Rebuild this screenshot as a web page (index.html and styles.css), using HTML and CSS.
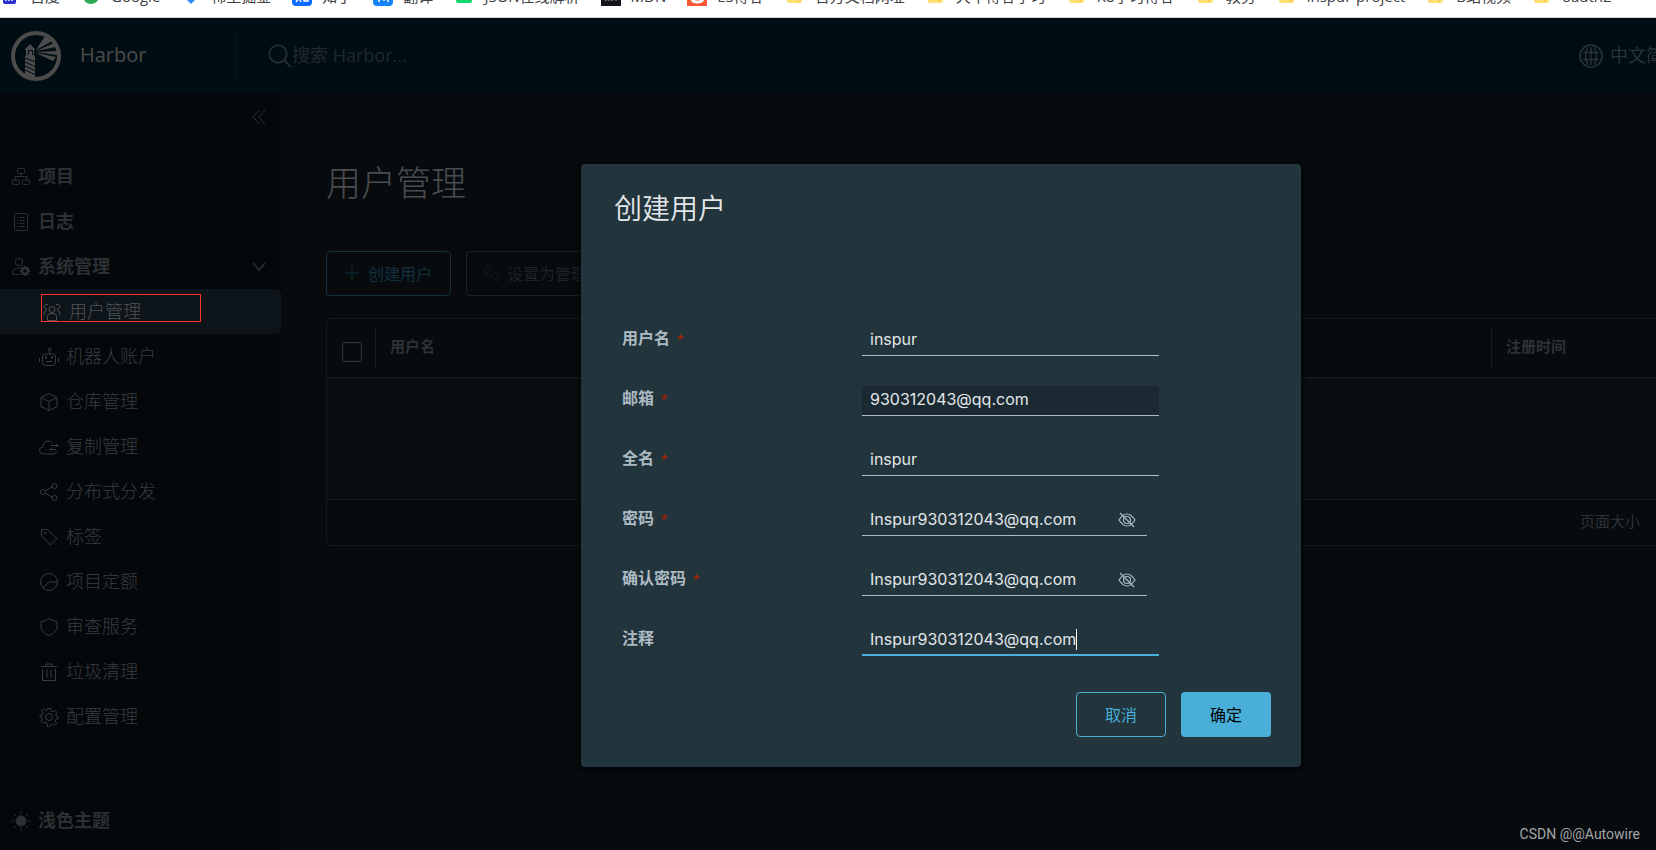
FILE: index.html
```html
<!DOCTYPE html>
<html lang="zh-CN">
<head>
<meta charset="utf-8">
<title>Harbor</title>
<link rel="stylesheet" href="styles.css">
</head>
<body>
<nav class="bookmarks" aria-label="书签">
  <div class="bookmark-row">
    <a class="bookmark" href="#"><svg class="fav" viewBox="0 0 20 20"><path d="M3 10h13v6q0 2-3 2H6q-3 0-3-2z" fill="#2b2fd6"/><path d="M6 13v2M9 13v2M12 13v2" stroke="#fff" stroke-width="1.4"/></svg>百度</a>
    <a class="bookmark" href="#"><svg class="fav" viewBox="0 0 20 20"><circle cx="10" cy="10" r="8" fill="#2fa94f"/></svg>Google</a>
    <a class="bookmark" href="#"><svg class="fav" viewBox="0 0 20 20"><path d="M10 4l7 7-7 7-7-7z" fill="#2d8cff"/></svg>稀土掘金</a>
    <a class="bookmark" href="#"><svg class="fav" viewBox="0 0 20 20"><rect width="20" height="20" rx="4" fill="#0b6cff"/><path d="M4 16l3-4 2 4M12 12v3h4v-3" stroke="#fff" stroke-width="1.5" fill="none"/></svg>知乎</a>
    <a class="bookmark" href="#"><svg class="fav" viewBox="0 0 20 20"><rect width="20" height="20" rx="4" fill="#1684fc"/><path d="M6 16v-4M11 12v3M15 16v-4" stroke="#fff" stroke-width="1.5" fill="none"/></svg>翻译</a>
    <a class="bookmark" href="#"><svg class="fav" viewBox="0 0 20 20"><rect x="2" width="16" height="17" rx="2" fill="#12d66b"/></svg>JSON在线解析</a>
    <a class="bookmark" href="#"><svg class="fav" viewBox="0 0 20 20"><rect width="20" height="20" fill="#15141a"/><path d="M5 15v-3M8 15v-3M11 15v-3M15 15v-3" stroke="#bbb"/></svg>MDN</a>
    <a class="bookmark" href="#"><svg class="fav" viewBox="0 0 20 20"><rect width="20" height="20" fill="#fc5531"/><path d="M5 12q0 4 5 4t6-3" stroke="#fff" stroke-width="3" fill="none"/></svg>ES博客</a>
    <a class="bookmark" href="#"><svg class="fav" viewBox="0 0 20 20"><use href="#folder"/></svg>官方文档网址</a>
    <a class="bookmark" href="#"><svg class="fav" viewBox="0 0 20 20"><use href="#folder"/></svg>大牛博客学习</a>
    <a class="bookmark" href="#"><svg class="fav" viewBox="0 0 20 20"><use href="#folder"/></svg>K8学习博客</a>
    <a class="bookmark" href="#"><svg class="fav" viewBox="0 0 20 20"><use href="#folder"/></svg>教务</a>
    <a class="bookmark" href="#"><svg class="fav" viewBox="0 0 20 20"><use href="#folder"/></svg>inspur-project</a>
    <a class="bookmark" href="#"><svg class="fav" viewBox="0 0 20 20"><use href="#folder"/></svg>B站视频</a>
    <a class="bookmark" href="#"><svg class="fav" viewBox="0 0 20 20"><use href="#folder"/></svg>oauth2</a>
  </div>
  <svg class="defs" aria-hidden="true"><defs><g id="folder"><rect x="2" y="3" width="15" height="14" rx="2" fill="#ffdf72"/><path d="M4 13h9M13 4v12" stroke="#e9be3a" fill="none"/></g></defs></svg>
</nav>

<div class="app">
  <header class="topbar">
    <a class="brand" href="#">
      <svg class="logo" viewBox="0 0 50 50">
        <circle cx="25" cy="25" r="23" fill="none" stroke="currentColor" stroke-width="4"/>
        <path fill="currentColor" fill-rule="evenodd" d="M14 18l5-5 5 5v1h-1v6h1v23q-5 1-10-2V25h1v-6h-1zM17 19v5h1v-4h3v4h1v-5z"/>
        <path fill="currentColor" d="M25 19L34 5l7 5zM25 20l18-8 2 4zM25 21l21-1v4zM25 22l20 4-3 4z"/>
        <path class="cut" d="M14 27l11 4M14 31l11 5M14 35l11 5M14 39l11 5"/>
      </svg>
      <span class="brand-name">Harbor</span>
    </a>
    <label class="search">
      <svg class="search-icon" viewBox="0 0 24 24"><circle cx="10" cy="10" r="8.700"/><path d="M16.500 16.500l6 6.500"/></svg>
      <input class="search-input" type="text" placeholder="搜索 Harbor..." aria-label="搜索 Harbor">
    </label>
    <button class="lang" type="button">
      <svg class="globe" viewBox="0 0 24 24"><circle cx="12" cy="12" r="11"/><path d="M12 3v18M4 8.500h16M4 15.500h16M9 3q-5 9 0 18M15 3q5 9 0 18"/></svg>
      <span>中文简体</span>
    </button>
  </header>

  <div class="content">
    <aside class="sidebar">
      <button class="collapse" type="button" aria-label="收起"><svg viewBox="0 0 14 14"><path d="M7 0L1 7l6 7M13 0L7 7l6 7"/></svg></button>
      <nav class="nav">
        <a class="item group" href="#"><svg class="ico" viewBox="0 0 20 20"><rect x="6.500" y="1.500" width="7" height="5" rx="1"/><rect x="1.500" y="13" width="7" height="4.500" rx="1"/><rect x="11.500" y="13" width="7" height="4.500" rx="1"/><path d="M10 6.500v3M4 13V9.500h12V13"/></svg>项目</a>
        <a class="item group" href="#"><svg class="ico" viewBox="0 0 20 20"><rect x="3.500" y="1.500" width="13" height="17" rx="1"/><path d="M6 5.500h1M8.500 5.500h5M6 8.500h1M8.500 8.500h5M6 11.500h1M8.500 11.500h5M6 14.500h1M8.500 14.500h5"/></svg>日志</a>
        <a class="item group" href="#"><svg class="ico" viewBox="0 0 20 20"><circle cx="8" cy="5" r="3.700"/><path d="M9 17.500H1.500V15q1-4 6.500-4h2"/><circle cx="14" cy="14" r="3" stroke-width="2.400"/><path stroke-width="2" d="M14 9v2M14 17v2M9 14h2M17 14h2M10.500 10.500l1.400 1.400M16 16l1.500 1.500M17.500 10.500L16 12M12 16l-1.500 1.500"/></svg>系统管理<svg class="chevron" viewBox="0 0 14 10"><path d="M1 1l6 7 6-7"/></svg></a>
        <a class="item child active" href="#"><svg class="ico" viewBox="0 0 20 20"><circle cx="10" cy="7.500" r="3"/><path d="M5.500 18.500v-4q0-3 4.500-3t4.500 3v4zM2 13v-2q0-2 3-2.500M18 13v-2q0-2-3-2.500"/><path d="M6 3a2.300 2.300 0 1 0-1 4M14 3a2.300 2.300 0 1 1 1 4"/></svg>用户管理<span class="marker"></span></a>
        <a class="item child" href="#"><svg class="ico" viewBox="0 0 20 20"><rect x="3.500" y="7" width="13" height="11.500" rx="3"/><circle cx="10.500" cy="2.500" r="1.500"/><path d="M10.500 4v3M.5 11v4M19.500 11v4M7 14.500h6"/><path stroke-width="2" d="M6 10.500h2M12 10.500h2"/></svg>机器人账户</a>
        <a class="item child" href="#"><svg class="ico" viewBox="0 0 20 20"><path d="M10 1.500l8 4v9l-8 4-8-4v-9zM2 5.500l8 4 8-4M10 9.500v9"/></svg>仓库管理</a>
        <a class="item child" href="#"><svg class="ico" viewBox="0 0 20 20"><path d="M17.500 14q0 3-4 3H4.500Q.5 17 .5 13.500T4 10q0-6 5.500-6 3 0 4 2.500M12 8.500h7M17 6.500l2 2-2 2M17 12.500h-6M13 10.500l-2 2 2 2"/></svg>复制管理</a>
        <a class="item child" href="#"><svg class="ico" viewBox="0 0 20 20"><circle cx="4" cy="10" r="2.500"/><circle cx="15.500" cy="4" r="2.500"/><circle cx="15.500" cy="16" r="2.500"/><path d="M6 9l7-4M6 11l7 4"/></svg>分布式分发</a>
        <a class="item child" href="#"><svg class="ico" viewBox="0 0 20 20"><path d="M2.500 2.500h6l9.500 9-6.500 6.500-9-9z"/><circle cx="6" cy="6" r=".8"/></svg>标签</a>
        <a class="item child" href="#"><svg class="ico" viewBox="0 0 20 20"><circle cx="10" cy="10" r="8.500"/><path d="M18 10h-8l-6 6"/></svg>项目定额</a>
        <a class="item child" href="#"><svg class="ico" viewBox="0 0 20 20"><path d="M10 1.500q4 3 8 3v5q0 6-8 9-8-3-8-9v-5q4 0 8-3z"/></svg>审查服务</a>
        <a class="item child" href="#"><svg class="ico" viewBox="0 0 20 20"><path d="M2 4.500h16M7 4V2h6v2M3.500 7v11.500h13V7M8 7.500v8M12 7.500v8"/></svg>垃圾清理</a>
        <a class="item child" href="#"><svg class="ico" viewBox="0 0 20 20"><circle cx="10" cy="10" r="3.500"/><path d="M8.500 1.500h3l.5 2.500 2 .8 2-1.500 2 2-1.300 2.200.8 1.500 1.500.5v2l-2 .8-.8 2 1.500 2-2 2-2-1.300-2 .8-.7 2H8.500L8 16l-2-.8-2 1.300-2-2L3.500 12.300 3 10.800 1 10V8.500L3.300 8 4 6 2.500 4l2-2L6.500 3.700 8 3z"/></svg>配置管理</a>
      </nav>
      <button class="item group theme" type="button"><svg class="ico" viewBox="0 0 20 20"><circle cx="10" cy="10" r="5" fill="currentColor"/><path d="M10 0v3M10 17v3M0 10h3M17 10h3M3 3l2 2M15 15l2 2M17 3l-2 2M3 17l2-2"/></svg>浅色主题</button>
    </aside>

    <main class="main">
      <h1 class="page-title">用户管理</h1>
      <div class="actions">
        <button class="btn ghost" type="button"><svg class="act-ico" viewBox="0 0 16 16"><path d="M8 1v14M1 8h14"/></svg>创建用户</button>
        <button class="btn ghost off" type="button"><svg class="act-ico wrench" viewBox="0 0 20 20"><path d="M3 2l4 4-3 2-3-3q-1 5 3 6 2 .5 3 0l7 7q2 2 3.500 0t0-3.500l-7-7Q11 3 7 1.500 5 1 3 2zM16 16h.5"/></svg>设置为管理员</button>
      </div>
      <div class="grid">
        <table class="users">
          <thead>
            <tr>
              <th class="pick"><input class="tick" type="checkbox" aria-label="全选"></th>
              <th class="name"><span class="col">用户名</span></th>
              <th class="time"><span class="col">注册时间</span></th>
            </tr>
          </thead>
          <tbody><tr><td class="empty" colspan="3"></td></tr></tbody>
        </table>
        <div class="grid-foot">页面大小</div>
      </div>
    </main>
  </div>
</div>

<div class="modal" role="dialog" aria-labelledby="dlg-title">
  <h2 class="modal-title" id="dlg-title">创建用户</h2>
  <form class="form">
    <div class="row"><label class="label" for="user">用户名<span class="req">*</span></label><div class="field"><input class="input" id="user" type="text" value="inspur"></div></div>
    <div class="row"><label class="label" for="mail">邮箱<span class="req">*</span></label><div class="field"><input class="input filled" id="mail" type="text" value="930312043@qq.com"></div></div>
    <div class="row"><label class="label" for="full">全名<span class="req">*</span></label><div class="field"><input class="input" id="full" type="text" value="inspur"></div></div>
    <div class="row"><label class="label" for="pass">密码<span class="req">*</span></label><div class="field secret"><input class="input" id="pass" type="text" value="Inspur930312043@qq.com"><button class="eye" type="button" aria-label="隐藏密码"><svg viewBox="0 0 18 16"><path d="M1 8q8-12 16 0-8 12-16 0zM2 1l14 14"/><circle cx="9" cy="8" r="3.500"/></svg></button></div></div>
    <div class="row"><label class="label" for="again">确认密码<span class="req">*</span></label><div class="field secret"><input class="input" id="again" type="text" value="Inspur930312043@qq.com"><button class="eye" type="button" aria-label="隐藏确认密码"><svg viewBox="0 0 18 16"><path d="M1 8q8-12 16 0-8 12-16 0zM2 1l14 14"/><circle cx="9" cy="8" r="3.500"/></svg></button></div></div>
    <div class="row"><label class="label" for="note">注释</label><div class="field"><input class="input focused" id="note" type="text" value="Inspur930312043@qq.com"><span class="caret"></span></div></div>
  </form>
  <div class="modal-foot">
    <button class="btn outline" type="button">取消</button>
    <button class="btn solid" type="button">确定</button>
  </div>
</div>
<div class="watermark">CSDN @@Autowire</div>
</body>
</html>
```
FILE: styles.css
```css
* { box-sizing: border-box; }
html, body { height: 100%; }
body {
  margin: 0;
  display: flex;
  flex-direction: column;
  position: relative;
  overflow: hidden;
  background: #070b0e;
  font-family: "Open Sans", "Noto Sans CJK SC", sans-serif;
}
button, input { font: inherit; color: inherit; }
button { background: none; border: 0; padding: 0; }
a { color: inherit; text-decoration: none; }
svg { display: block; flex: none; fill: none; stroke: currentColor; }

.bookmarks {
  flex: none;
  height: 18px;
  background: #fff;
  border-bottom: 1px solid #cfd5d5;
  overflow: hidden;
}
.bookmark-row { display: flex; gap: 21px; margin-top: -14px; }
.bookmark {
  display: flex;
  flex: none;
  align-items: center;
  gap: 10px;
  font-size: 15px;
  line-height: 20px;
  color: #3c4043;
  white-space: nowrap;
}
.fav { width: 20px; height: 20px; stroke: none; }
.defs { width: 0; height: 0; }

.app { flex: 1; display: flex; flex-direction: column; min-height: 0; }
.topbar {
  flex: none;
  height: 75px;
  display: flex;
  align-items: center;
  background: #000e14;
  color: #2a3338;
  overflow: hidden;
}
.brand {
  width: 237px;
  height: 50px;
  flex: none;
  display: flex;
  align-items: center;
  gap: 19px;
  padding-left: 11px;
  border-right: 1px solid #0c181e;
  color: #4b4b4b;
}
.logo { width: 50px; height: 50px; stroke: none; }
.logo .cut { stroke: #000e14; stroke-width: 1; }
.brand-name { padding-bottom: 2px; font-size: 20px; }
.search { flex: 1; display: flex; align-items: center; padding-left: 31px; }
.search-icon { width: 24px; height: 24px; stroke-width: 1.500; }
.search-input {
  flex: 1;
  min-width: 0;
  border: 0;
  padding: 0 0 2px;
  background: none;
  font-size: 18px;
}
.search-input::placeholder { color: #20282d; opacity: 1; }
.lang {
  display: flex;
  align-items: center;
  gap: 7px;
  width: 77px;
  flex: none;
  font-size: 18px;
  white-space: nowrap;
}
.lang span { padding-bottom: 4px; }
.globe { width: 24px; height: 24px; stroke-width: 1.500; }

.content { flex: 1; display: flex; min-height: 0; }
.sidebar {
  width: 281px;
  flex: none;
  display: flex;
  flex-direction: column;
  background: #04080b;
  color: #2c3033;
  padding-bottom: 8px;
}
.collapse { align-self: flex-end; height: 61px; padding: 0 15px 14px 0; }
.collapse svg { width: 14px; height: 14px; }
.nav { flex: 1; }
.item {
  position: relative;
  display: flex;
  align-items: center;
  gap: 7px;
  height: 45px;
  font-size: 18px;
  line-height: 24px;
}
.nav .item, .theme { padding-bottom: 2px; }
.ico { width: 20px; height: 20px; margin-top: 3px; }
.group { padding: 0 15px 0 11px; font-weight: 700; }
.child { padding-left: 39px; font-weight: 300; color: #383c3f; }
.child.active {
  padding-left: 42px;
  background: #0d141a;
  border-radius: 0 5px 5px 0;
  color: #4f5355;
}
.marker {
  position: absolute;
  left: 41px;
  top: 5px;
  width: 160px;
  height: 28px;
  border: 1px solid #ff332c;
}
.chevron { width: 14px; height: 10px; margin-left: auto; margin-top: 2px; stroke-width: 1.500; }

.main { flex: 1; min-width: 0; padding: 64px 0 0 45px; }
.page-title {
  margin: 0 0 42px;
  font-size: 35px;
  line-height: 52px;
  font-weight: 300;
  color: #4a4d4f;
}
.actions { display: flex; gap: 15px; margin-bottom: 22px; }
.btn {
  height: 45px;
  display: flex;
  align-items: center;
  justify-content: center;
  padding-bottom: 2px;
  border-radius: 4px;
  font-size: 16px;
  white-space: nowrap;
}
.ghost { gap: 8px; padding: 0 18px 2px 17px; border: 1px solid #14303e; color: #14303e; }
.ghost.off { padding-left: 16px; gap: 6px; border-color: #1d2327; color: #1d2327; }
.act-ico { width: 16px; height: 16px; }
.wrench { width: 18px; height: 18px; color: #0e2129; }

.grid {
  border: 1px solid #14191c;
  border-right: 0;
  border-radius: 4px 0 0 4px;
  color: #2e3235;
  font-size: 15px;
}
.users { width: 100%; border-collapse: collapse; table-layout: fixed; }
.users th { height: 59px; padding: 0; text-align: left; border-bottom: 2px solid #14191c; }
.pick { width: 48px; }
.time { width: 165px; }
.tick {
  appearance: none;
  display: block;
  width: 20px;
  height: 20px;
  margin: 7px 0 0 15px;
  border: 1px solid #34393c;
  border-radius: 4px;
}
.col {
  display: block;
  height: 43px;
  padding-left: 14px;
  line-height: 38px;
  border-left: 1px solid #14191c;
}
.empty { height: 121px; padding: 0; background: #090e10; }
.grid-foot {
  height: 46px;
  border-top: 1px solid #14191c;
  padding-right: 16px;
  line-height: 42px;
  text-align: right;
}

/* The dialog floats over the page */
.modal {
  position: absolute;
  top: 164px;
  left: 581px;
  width: 720px;
  padding: 24px 30px 30px;
  border-radius: 4px;
  background: #22343c;
  box-shadow: 0 1px 3px 3px rgba(0, 0, 0, 0.500);
  color: #e3e7ea;
}
.modal-title {
  margin: 0 0 80px;
  padding-left: 3px;
  font-size: 28px;
  line-height: 40px;
  font-weight: 350;
}
.form { padding-left: 11px; }
.row {
  display: grid;
  grid-template-columns: 240px 297px;
  padding: 18px 0 12px;
}
.label { font-size: 16px; line-height: 24px; font-weight: 600; color: #adbbc4; }
.req { margin-left: 7px; font-size: 12px; color: #a32100; }
.field { position: relative; height: 30px; }
.field.secret { margin-right: 12px; }
.input {
  display: block;
  width: 100%;
  height: 30px;
  padding: 0 8px 3px;
  border: 0;
  border-bottom: 1px solid #adbbc4;
  border-radius: 0;
  background: none;
  font-family: Inter, sans-serif;
  font-size: 16px;
}
.input.filled { background: #1b2a32; }
.input.focused { padding-bottom: 2px; border-bottom: 2px solid #49afd9; }
.eye { position: absolute; right: 11px; top: 6px; color: #adbbc4; }
.eye svg { width: 18px; height: 16px; stroke-width: 1.200; }
.caret { position: absolute; left: 214px; top: 3px; width: 1px; height: 21px; background: #fff; }
.modal-foot { display: flex; justify-content: flex-end; gap: 15px; margin-top: 24px; }
.modal-foot .btn { width: 90px; }
.outline { border: 1px solid #49afd9; color: #49afd9; }
.solid { background: #49afd9; color: #000; }

.watermark {
  position: absolute;
  right: 16px;
  bottom: 6px;
  font-family: Roboto, sans-serif;
  font-size: 14px;
  line-height: 20px;
  color: #a3a5a6;
}
```
